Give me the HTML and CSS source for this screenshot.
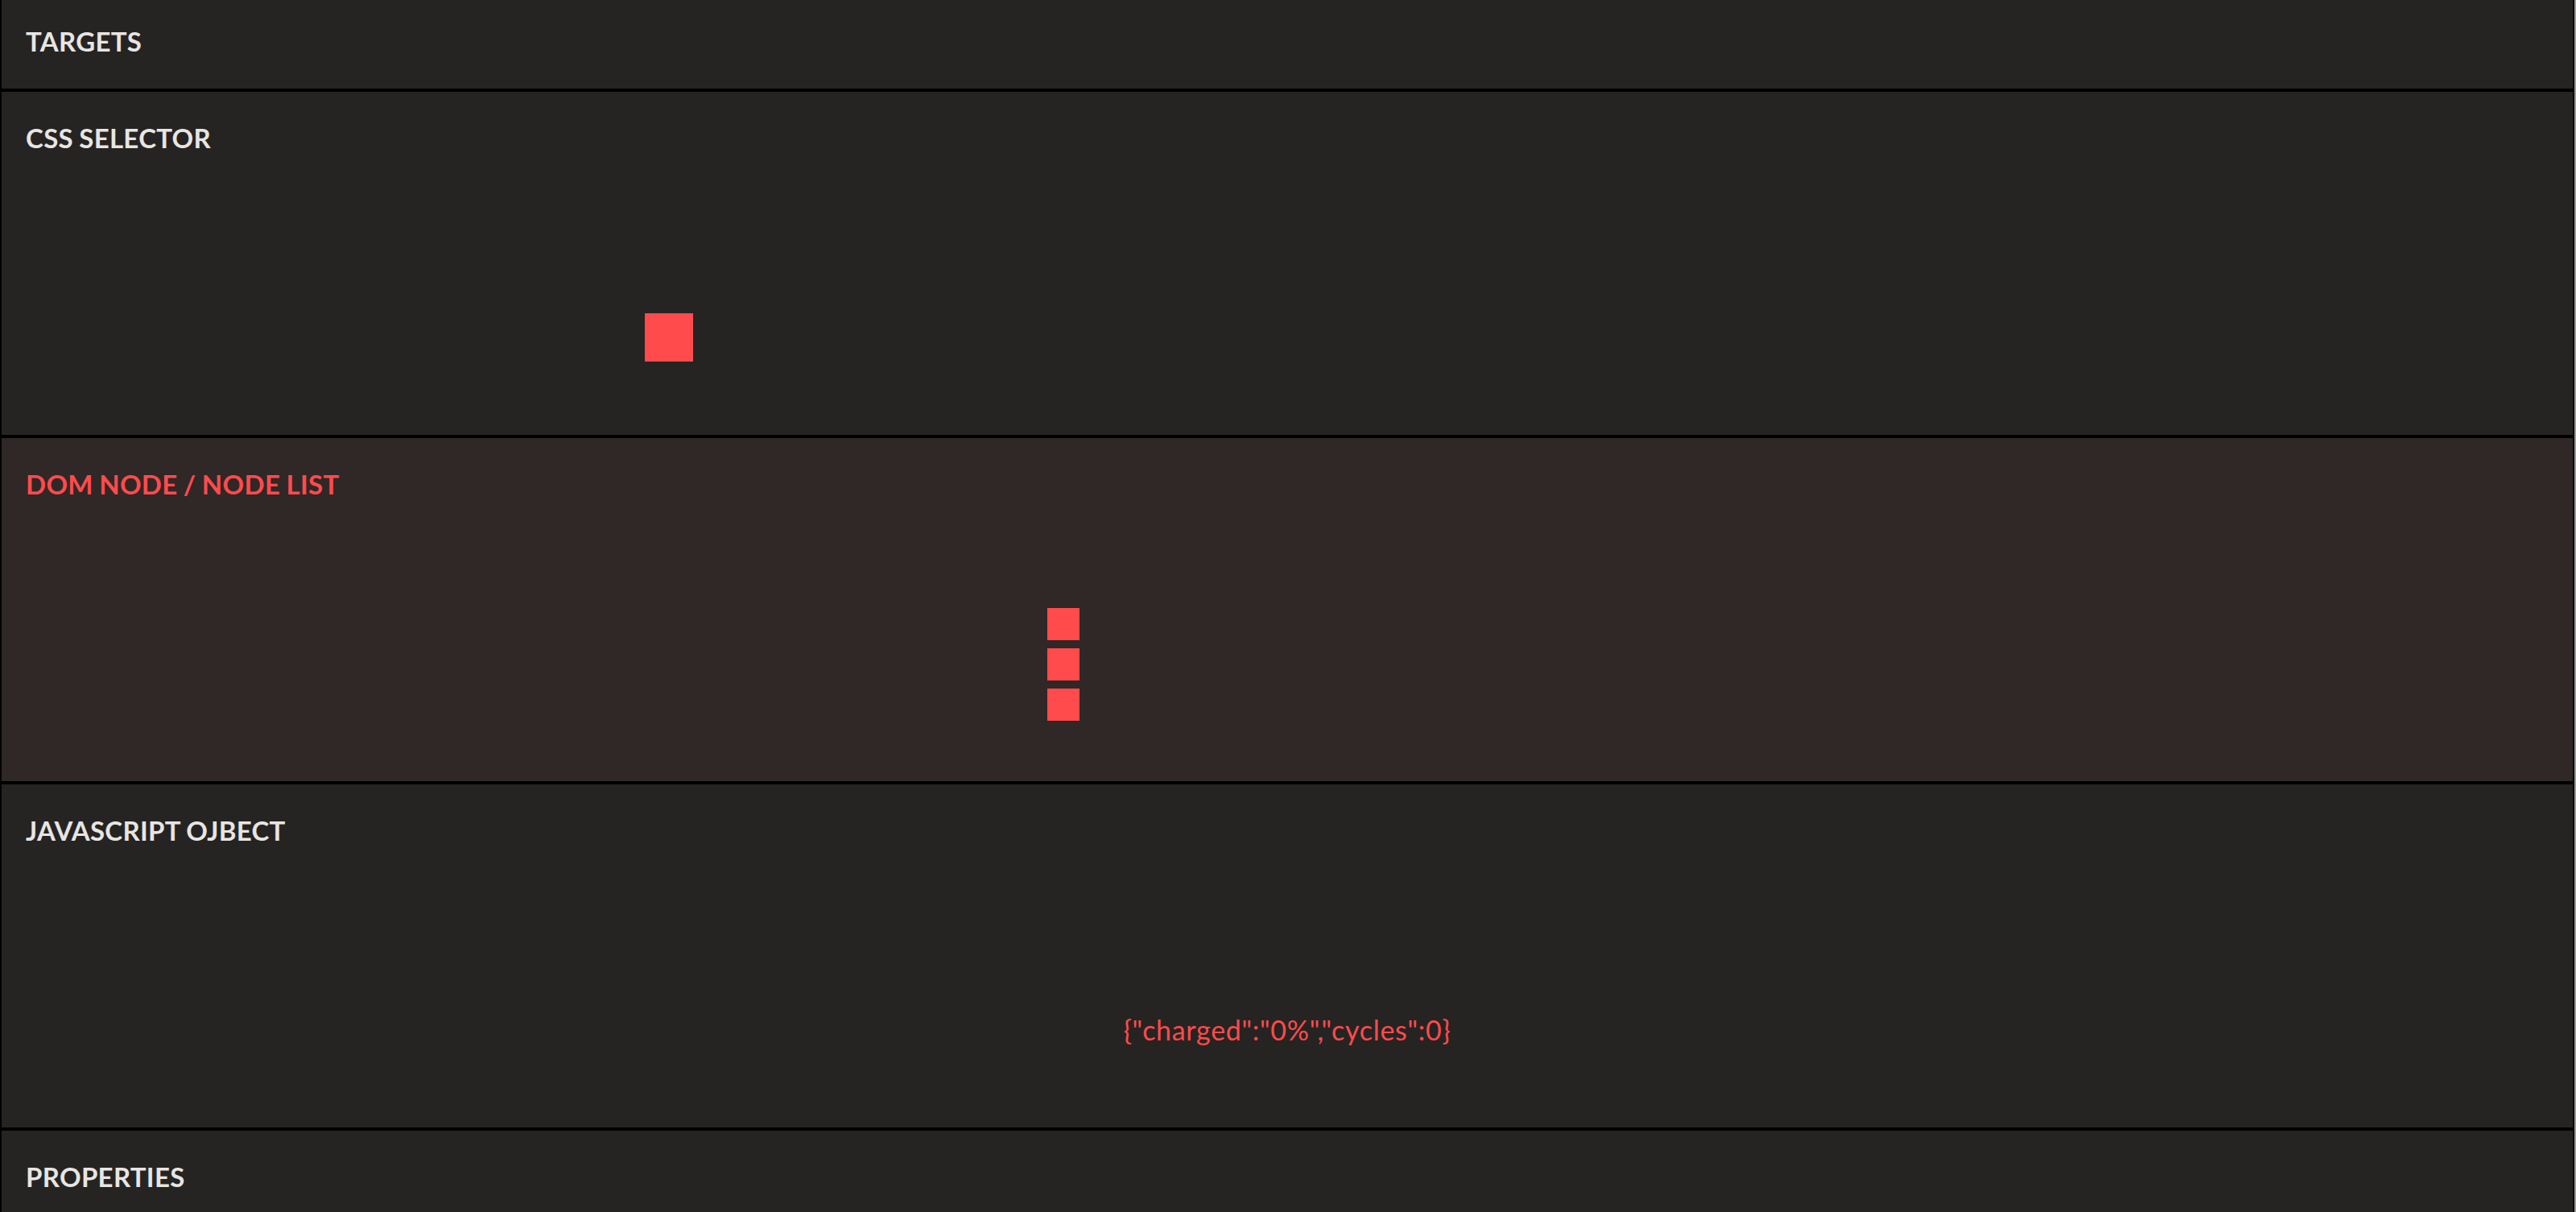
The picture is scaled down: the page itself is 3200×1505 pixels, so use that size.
FILE: index.html
```html
<!DOCTYPE html>
<html>
<head>
<meta charset="utf-8">
<link rel="stylesheet" href="styles.css">
</head>
<body>
<div class="page">
  <main class="docs">
    <section class="panel panel-header">
      <h2 class="panel-title">TARGETS</h2>
    </section>
    <section class="panel">
      <h3 class="panel-title">CSS SELECTOR</h3>
      <div class="demo demo-css">
        <div class="square square-lg"></div>
      </div>
    </section>
    <section class="panel panel-active">
      <h3 class="panel-title">DOM NODE / NODE LIST</h3>
      <div class="demo demo-dom">
        <div class="square square-sm"></div>
        <div class="square square-sm"></div>
        <div class="square square-sm"></div>
      </div>
    </section>
    <section class="panel">
      <h3 class="panel-title">JAVASCRIPT OJBECT</h3>
      <div class="demo demo-js">
        <pre class="json-log">{"charged":"0%","cycles":0}</pre>
      </div>
    </section>
    <section class="panel">
      <h3 class="panel-title">PROPERTIES</h3>
    </section>
  </main>
  <div class="scrollbar"></div>
</div>
</body>
</html>
```

FILE: styles.css
```css
html, body {
  margin: 0;
  padding: 0;
  height: 100%;
  overflow: hidden;
  background: #000;
}

.page {
  display: flex;
  height: 1505px;
}

.docs {
  flex: 1;
  display: flex;
  flex-direction: column;
  gap: 4px;
  padding: 0 2px 0 2px;
}

.scrollbar {
  width: 2px;
  background: #9a9a9a;
}

.panel {
  flex: none;
  height: 426px;
  box-sizing: border-box;
  background: #252423;
  padding: 0 30px;
  display: flex;
  flex-direction: column;
}

.panel-header {
  height: 110px;
}

.panel-active {
  background: #302727;
}

.panel-title {
  margin: 0;
  padding-top: 37px;
  font-family: "Lato", sans-serif;
  font-weight: 700;
  font-size: 33px;
  line-height: 40px;
  color: #e8e5e2;
  letter-spacing: 0.3px;
  word-spacing: -1px;
}

.panel-header .panel-title {
  padding-top: 31px;
}

.panel-active .panel-title {
  color: #ff4b4b;
}

.demo {
  display: flex;
  flex-direction: column;
}

.square {
  background: #ff4b4b;
}

.square-lg {
  width: 60px;
  height: 60px;
}

.square-sm {
  width: 40px;
  height: 40px;
}

.demo-css {
  margin-top: 198px;
  padding-left: 769px;
}

.demo-dom {
  margin-top: 134px;
  padding-left: 1269px;
  gap: 10px;
}

.demo-js {
  margin-top: 208px;
  align-items: center;
}

.json-log {
  margin: 0;
  font-family: "Lato", sans-serif;
  font-size: 34px;
  line-height: 40px;
  letter-spacing: 0.7px;
  color: #ff4b4b;
}
```
